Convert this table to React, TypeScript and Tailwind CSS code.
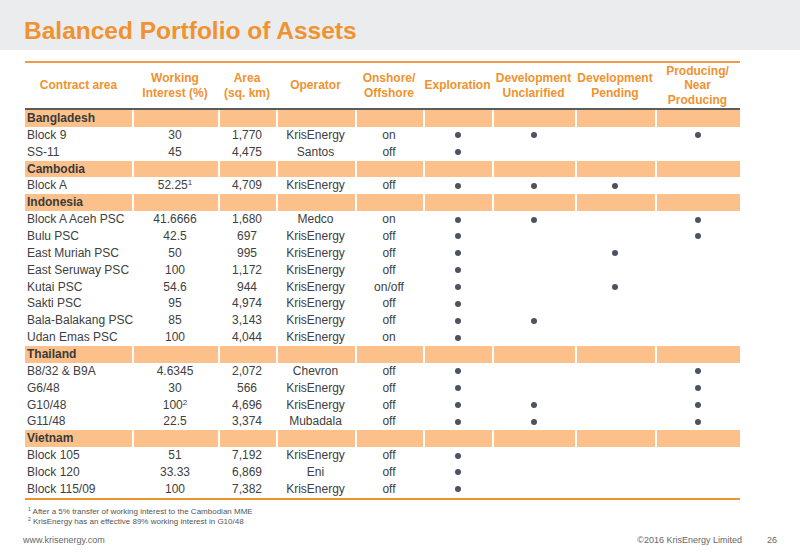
const cols = 'grid grid-cols-[107px_86px_58px_79px_68px_69px_83px_80px_85px]';

type Row = {
  name: string;
  wi: string;
  sup?: string;
  area: string;
  op: string;
  shore: string;
  dots: [boolean, boolean, boolean, boolean];
};

type Group = { country: string; rows: Row[] };

const data: Group[] = [
  {
    country: 'Bangladesh',
    rows: [
      { name: 'Block 9', wi: '30', area: '1,770', op: 'KrisEnergy', shore: 'on', dots: [true, true, false, true] },
      { name: 'SS-11', wi: '45', area: '4,475', op: 'Santos', shore: 'off', dots: [true, false, false, false] },
    ],
  },
  {
    country: 'Cambodia',
    rows: [
      { name: 'Block A', wi: '52.25', sup: '1', area: '4,709', op: 'KrisEnergy', shore: 'off', dots: [true, true, true, false] },
    ],
  },
  {
    country: 'Indonesia',
    rows: [
      { name: 'Block A Aceh PSC', wi: '41.6666', area: '1,680', op: 'Medco', shore: 'on', dots: [true, true, false, true] },
      { name: 'Bulu PSC', wi: '42.5', area: '697', op: 'KrisEnergy', shore: 'off', dots: [true, false, false, true] },
      { name: 'East Muriah PSC', wi: '50', area: '995', op: 'KrisEnergy', shore: 'off', dots: [true, false, true, false] },
      { name: 'East Seruway PSC', wi: '100', area: '1,172', op: 'KrisEnergy', shore: 'off', dots: [true, false, false, false] },
      { name: 'Kutai PSC', wi: '54.6', area: '944', op: 'KrisEnergy', shore: 'on/off', dots: [true, false, true, false] },
      { name: 'Sakti PSC', wi: '95', area: '4,974', op: 'KrisEnergy', shore: 'off', dots: [true, false, false, false] },
      { name: 'Bala-Balakang PSC', wi: '85', area: '3,143', op: 'KrisEnergy', shore: 'off', dots: [true, true, false, false] },
      { name: 'Udan Emas PSC', wi: '100', area: '4,044', op: 'KrisEnergy', shore: 'on', dots: [true, false, false, false] },
    ],
  },
  {
    country: 'Thailand',
    rows: [
      { name: 'B8/32 & B9A', wi: '4.6345', area: '2,072', op: 'Chevron', shore: 'off', dots: [true, false, false, true] },
      { name: 'G6/48', wi: '30', area: '566', op: 'KrisEnergy', shore: 'off', dots: [true, false, false, true] },
      { name: 'G10/48', wi: '100', sup: '2', area: '4,696', op: 'KrisEnergy', shore: 'off', dots: [true, true, false, true] },
      { name: 'G11/48', wi: '22.5', area: '3,374', op: 'Mubadala', shore: 'off', dots: [true, true, false, true] },
    ],
  },
  {
    country: 'Vietnam',
    rows: [
      { name: 'Block 105', wi: '51', area: '7,192', op: 'KrisEnergy', shore: 'off', dots: [true, false, false, false] },
      { name: 'Block 120', wi: '33.33', area: '6,869', op: 'Eni', shore: 'off', dots: [true, false, false, false] },
      { name: 'Block 115/09', wi: '100', area: '7,382', op: 'KrisEnergy', shore: 'off', dots: [true, false, false, false] },
    ],
  },
];

const headers = [
  ['Contract area'],
  ['Working', 'Interest (%)'],
  ['Area', '(sq. km)'],
  ['Operator'],
  ['Onshore/', 'Offshore'],
  ['Exploration'],
  ['Development', 'Unclarified'],
  ['Development', 'Pending'],
  ['Producing/', 'Near', 'Producing'],
];

function Dot({ on }: { on: boolean }) {
  return (
    <div className="flex items-center justify-center">
      {on && <span className="block w-[6px] h-[6px] rounded-full bg-[#4b5360]" />}
    </div>
  );
}

function CountryRow({ name }: { name: string }) {
  return (
    <div className={`${cols} h-[16.87px]`}>
      <div className="bg-[#fcc18b] pl-[2px] font-bold text-[12px] leading-[16.87px] text-[#3a3a3a]">{name}</div>
      {Array.from({ length: 8 }).map((_, i) => (
        <div key={i} className="bg-[#fcc18b] border-l-[2px] border-white" />
      ))}
    </div>
  );
}

function DataRow({ r }: { r: Row }) {
  return (
    <div className={`${cols} h-[16.87px] text-[12px] leading-[16.87px] text-[#404040]`}>
      <div className="pl-[2px] whitespace-nowrap">{r.name}</div>
      <div className="text-center">
        {r.wi}
        {r.sup && <sup className="text-[8px] align-top leading-none relative top-[2px]">{r.sup}</sup>}
      </div>
      <div className="text-center">{r.area}</div>
      <div className="text-center">{r.op}</div>
      <div className="text-center">{r.shore}</div>
      {r.dots.map((d, i) => (
        <Dot key={i} on={d} />
      ))}
    </div>
  );
}

export default function App() {
  return (
    <div className="w-[800px] h-[558px] bg-white font-['Liberation_Sans',Arial,sans-serif] flex flex-col">
      <div className="h-[50px] bg-[#ebecee] pl-[24px] pt-[19px]">
        <h1 className="text-[24.5px] leading-none font-bold text-[#f0922f]">Balanced Portfolio of Assets</h1>
      </div>

      <div className="ml-[25px] w-[715px] mt-[11px]">
        <div className="h-[2px] bg-[#f29a45]" />
        <div className={`${cols} h-[47px] border-b-[2px] border-[#5c5c5c]`}>
          {headers.map((h, i) => (
            <div key={i} className="flex flex-col items-center justify-center text-center text-[12px] leading-[14.5px] font-bold text-[#f0922f]">
              {h.map((l) => (
                <span key={l}>{l}</span>
              ))}
            </div>
          ))}
        </div>

        {data.map((g) => (
          <div key={g.country}>
            <CountryRow name={g.country} />
            {g.rows.map((r) => (
              <DataRow key={r.name} r={r} />
            ))}
          </div>
        ))}
        <div className="h-[2px] bg-[#f0922f]" />
      </div>

      <div className="ml-[28px] mt-[7px] text-[8px] leading-[10px] text-[#555]">
        <p><sup className="text-[5px]">1</sup> After a 5% transfer of working interest to the Cambodian MME</p>
        <p><sup className="text-[5px]">2</sup> KrisEnergy has an effective 89% working interest in G10/48</p>
      </div>

      <div className="mt-auto mb-[11px] flex items-center text-[9px] text-[#666]">
        <span className="ml-[23px]">www.krisenergy.com</span>
        <span className="ml-auto">©2016 KrisEnergy Limited</span>
        <span className="ml-[25px] mr-[23px]">26</span>
      </div>
    </div>
  );
}
